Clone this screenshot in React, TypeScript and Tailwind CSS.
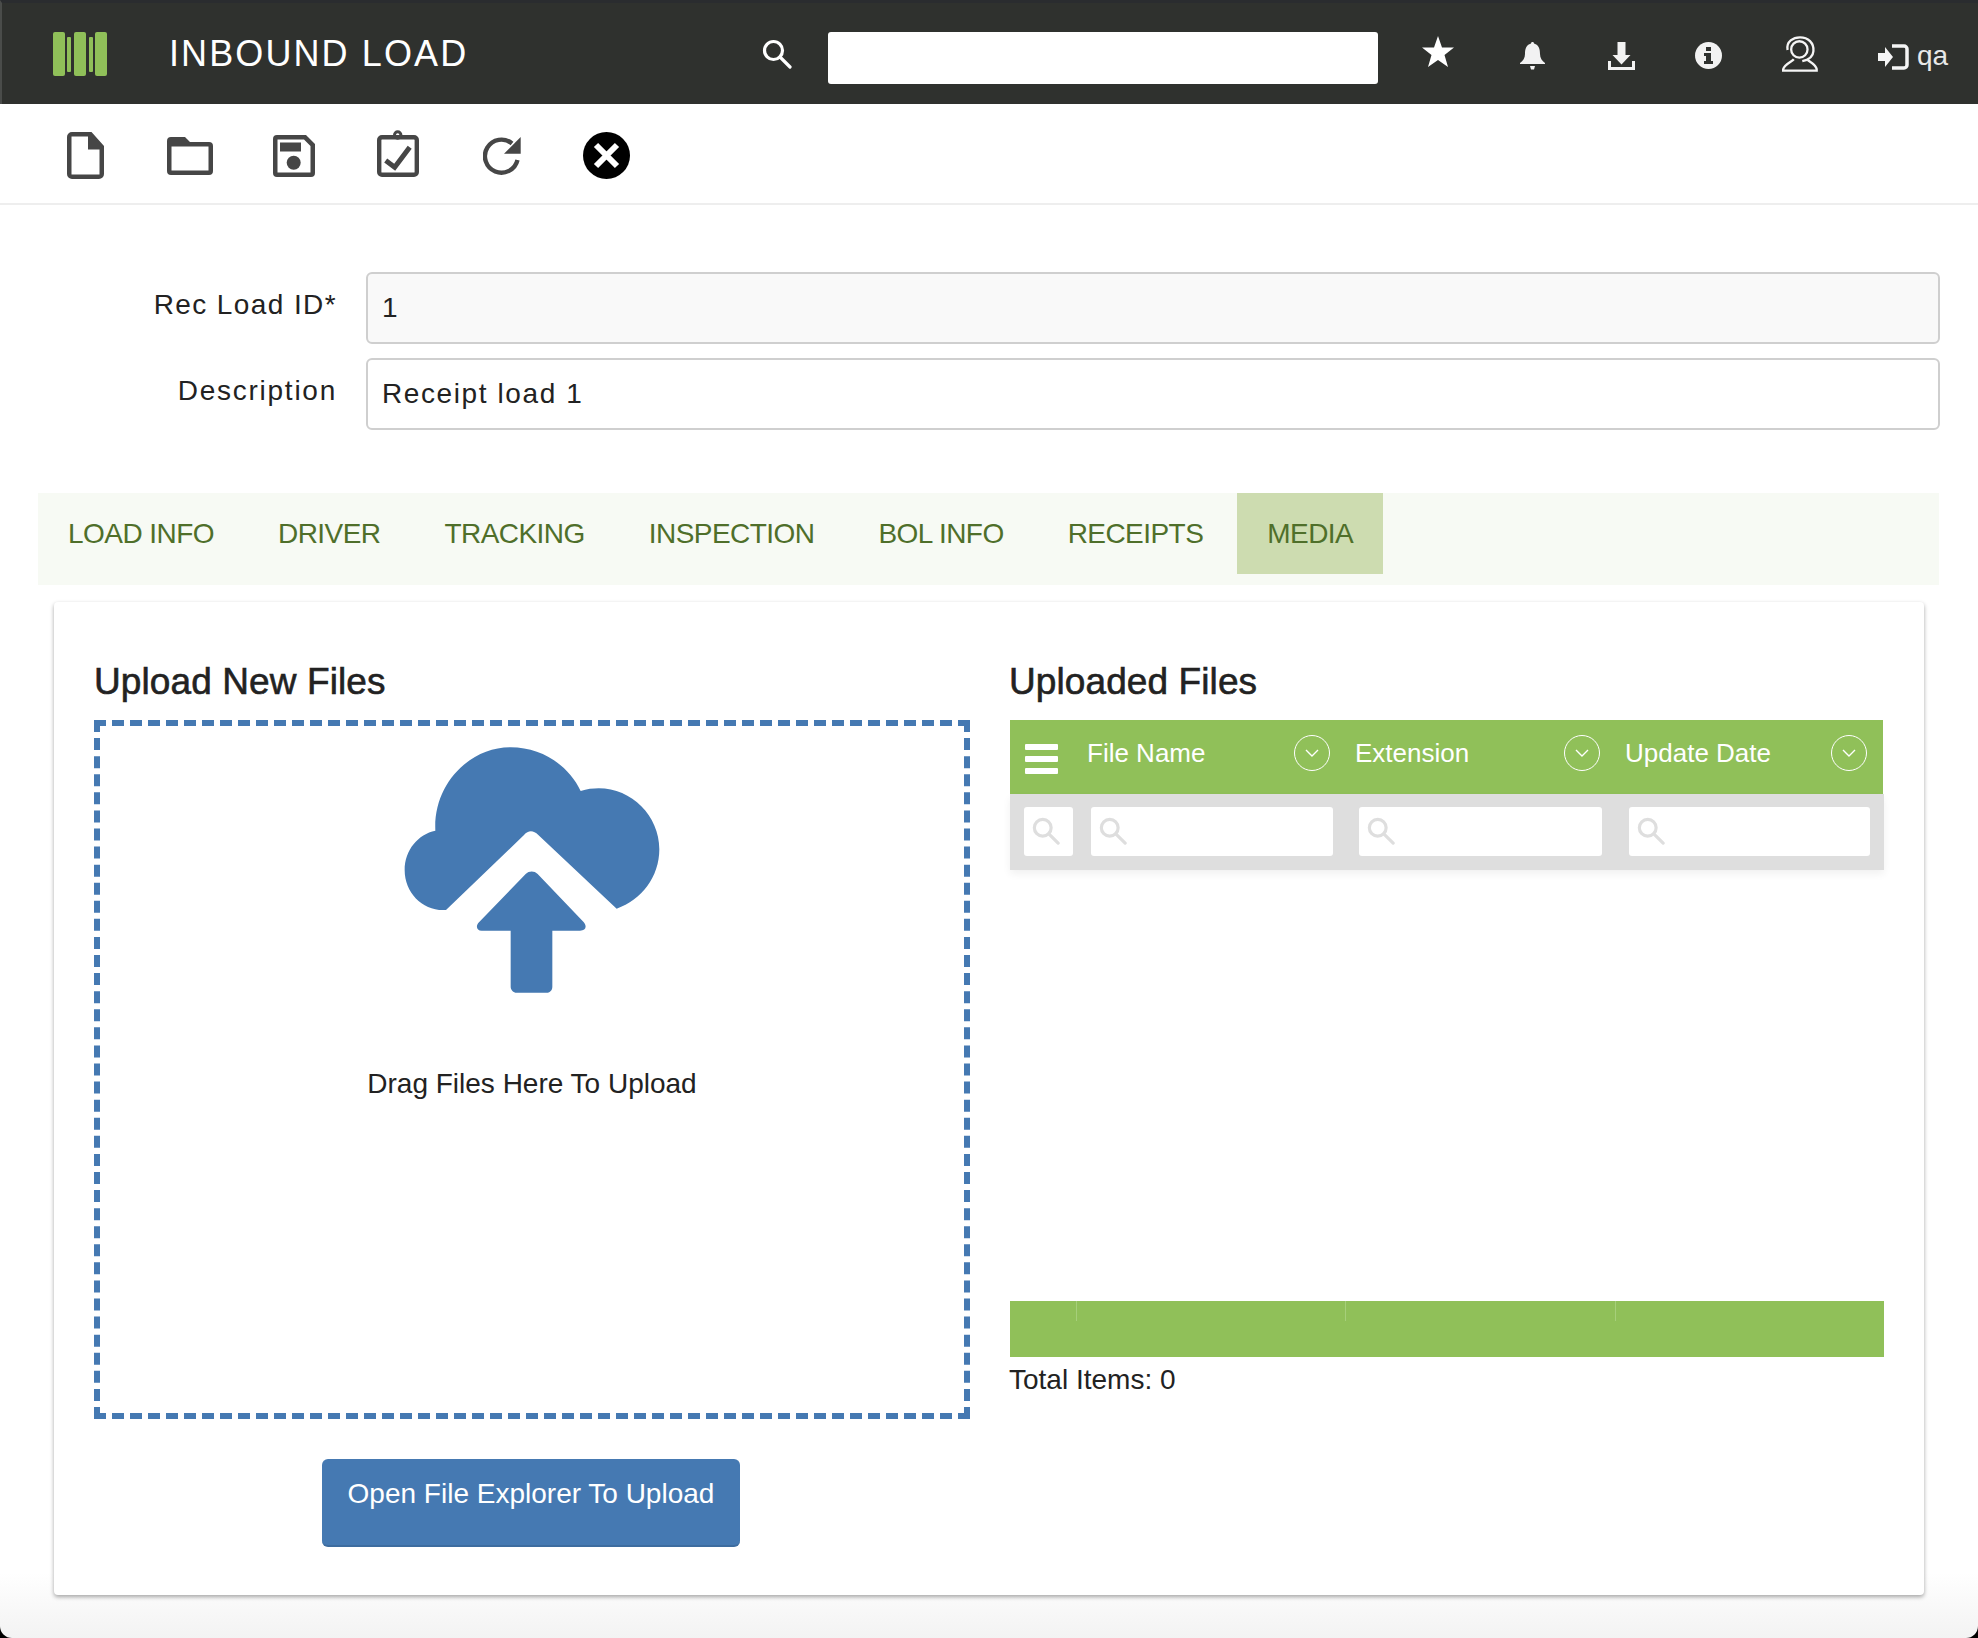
import React from "react";

const sans = "font-['Liberation_Sans',Arial,sans-serif]";
const tabs = ["LOAD INFO", "DRIVER", "TRACKING", "INSPECTION", "BOL INFO", "RECEIPTS", "MEDIA"];
const columns = ["File Name", "Extension", "Update Date"];

const Logo = () => (
  <svg width="54" height="44" viewBox="0 0 54 44" fill="#90c059">
    <rect x="0" y="0" width="12" height="44" rx="2" />
    <rect x="14" y="5" width="4" height="35" rx="1" />
    <rect x="21" y="0" width="12" height="44" rx="2" />
    <rect x="36" y="5" width="4" height="35" rx="1" />
    <rect x="42" y="0" width="12" height="44" rx="2" />
  </svg>
);

const SearchGlyph = ({ size, color, weight }: { size: number; color: string; weight: number }) => (
  <svg width={size} height={size} viewBox="0 0 30 30" fill="none" stroke={color} strokeWidth={weight}>
    <circle cx="11.5" cy="11.5" r="9" />
    <path strokeLinecap="round" d="M18 18L28 28" />
  </svg>
);

const FileIcon = () => (
  <svg width="37" height="47" viewBox="0 0 37 47" fill="#464646">
    <path fillRule="evenodd" d="M5 0H24.5L37 14V42a5 5 0 0 1-5 5H5a5 5 0 0 1-5-5V5a5 5 0 0 1 5-5ZM4.5 4.5V42.5H32.5V17.5H21V4.5Z" />
  </svg>
);

const FolderIcon = () => (
  <svg width="46" height="38" viewBox="0 0 46 38" fill="#464646">
    <path fillRule="evenodd" d="M4 0H18L23 5H42a4 4 0 0 1 4 4V34a4 4 0 0 1-4 4H4a4 4 0 0 1-4-4V4a4 4 0 0 1 4-4ZM4.5 9.5V33.5H41.5V9.5Z" />
  </svg>
);

const SaveIcon = () => (
  <svg width="42" height="42" viewBox="0 0 42 42" fill="#464646">
    <path fillRule="evenodd" d="M4 0H33L42 9V38a4 4 0 0 1-4 4H4a4 4 0 0 1-4-4V4a4 4 0 0 1 4-4ZM4.5 4.5V37.5H37.5V11L31 4.5Z" />
    <rect x="7" y="7.5" width="21" height="9" />
    <circle cx="20.7" cy="27.7" r="7" />
  </svg>
);

const ClipboardIcon = () => (
  <svg width="42" height="47" viewBox="0 0 42 47" fill="none" stroke="#464646">
    <path strokeWidth="4.4" d="M5 7.2H37a2.8 2.8 0 0 1 2.8 2.8V42a2.8 2.8 0 0 1-2.8 2.8H5a2.8 2.8 0 0 1-2.8-2.8V10a2.8 2.8 0 0 1 2.8-2.8Z" />
    <circle cx="20.7" cy="5" r="3.2" strokeWidth="3" />
    <path strokeWidth="5" d="M8.7 30.5L17.7 37.3L32.7 17.3" />
  </svg>
);

const RefreshIcon = () => (
  <svg width="39" height="38" viewBox="0 0 39 38" fill="none">
    <path stroke="#464646" strokeWidth="4.4" d="M34.5 23A16.5 16.5 0 1 1 29 6.5" />
    <path fill="#464646" d="M37.7 0V16.7H21Z" />
  </svg>
);

const CloseIcon = () => (
  <svg width="47" height="47" viewBox="0 0 47 47">
    <circle cx="23.5" cy="23.5" r="23.5" fill="#000" />
    <path stroke="#fff" strokeWidth="6" d="M13 13L34 34M34 13L13 34" />
  </svg>
);

const CloudUpload = () => (
  <svg width="300" height="294" viewBox="0 18 900 882" fill="#4579b2">
    <path d="M198 570C130 575 74 520 74 450C74 390 115 342 166 332C160 190 270 82 392 82C485 82 565 135 602 213C620 207 640 205 656 205C755 205 838 288 838 388C838 470 785 540 710 566L475 345C460 330 445 330 432 345Z" />
    <path d="M437 462C447 452 463 452 473 462L610 605C622 618 618 632 600 632H517V800C517 812 508 818 500 818H410C400 818 392 810 392 800V632H305C290 632 286 618 297 607Z" />
  </svg>
);

const StarIcon = () => (
  <svg width="32" height="32" viewBox="0 0 32 32" fill="#fff">
    <path d="M16 0L20 11.5H32L22.5 19L26 31L16 24L6 31L9.5 19L0 11.5H12Z" />
  </svg>
);

const BellIcon = () => (
  <svg width="25" height="28" viewBox="0 0 25 28" fill="#f2f2f2">
    <path d="M12.5 0C13.5 0 14 .6 14 1.5C19 3 20 7 20 12C20 16 22 19 25 21V22H0V21C3 19 5 16 5 12C5 7 6 3 11 1.5C11 .6 11.5 0 12.5 0Z" />
    <path d="M10 24H15L14 27.5H11Z" />
  </svg>
);

const DownloadIcon = () => (
  <svg width="27" height="28" viewBox="0 0 27 28" fill="#f2f2f2">
    <path d="M9.5 0H17.5V13H22.5L13.5 22.5L4.5 13H9.5Z" />
    <path d="M0 19H3V25H24V19H27V28H0Z" />
  </svg>
);

const InfoIcon = () => (
  <svg width="27" height="27" viewBox="0 0 27 27">
    <circle cx="13.5" cy="13.5" r="13.5" fill="#f2f2f2" />
    <rect x="11" y="5" width="5" height="4" fill="#2f312e" />
    <path fill="#2f312e" d="M9 11H16V19H18V22H9V19H11V14H9Z" />
  </svg>
);

const UserIcon = () => (
  <svg width="36" height="36" viewBox="0 0 110 108" fill="none" stroke="#f5f5f5" strokeWidth="7">
    <circle cx="53" cy="40" r="25" />
    <path d="M17 42C12 15 35 3 55 3C80 3 98 20 96 45C95 62 80 72 62 76" />
    <path d="M36 70C30 78 5 85 3 103V105H106V100C102 85 85 78 78 72" />
  </svg>
);

const SignInIcon = () => (
  <svg width="31" height="26" viewBox="0 0 31 26">
    <path fill="#f5f5f5" d="M0 9H7V3L15 13L7 23V17H0Z" />
    <path fill="none" stroke="#f5f5f5" strokeWidth="3.5" d="M14 2H26a3 3 0 0 1 3 3V21a3 3 0 0 1-3 3H14" />
  </svg>
);

const Chevron = () => (
  <span className="flex h-[36px] w-[36px] shrink-0 items-center justify-center rounded-full border-[1.5px] border-white">
    <svg width="14" height="8" viewBox="0 0 14 8" fill="none" stroke="#fff" strokeWidth="1.4">
      <path d="M1 1L7 7L13 1" />
    </svg>
  </span>
);

const FilterBox = ({ className }: { className: string }) => (
  <div className={`flex h-[49px] items-center rounded-[3px] bg-white pl-[8px] ${className}`}>
    <SearchGlyph size={28} color="#dedede" weight={3.4} />
  </div>
);

export default function App() {
  return (
    <div className="h-[1638px] bg-black">
      <div className={`${sans} h-[1638px] overflow-hidden rounded-b-[12px] bg-gradient-to-b from-white from-[96%] to-[#f3f3f3] text-[#222]`}>
        <header className="flex h-[104px] items-center border-t-[3px] border-l-2 border-t-[#2a2c2f] border-l-[#4a4c4a] bg-[#2f312e]">
          <div className="ml-[51px]">
            <Logo />
          </div>
          <h1 className="ml-[62px] w-[593px] text-[36px] tracking-[2.1px] text-white">INBOUND LOAD</h1>
          <SearchGlyph size={30} color="#fff" weight={3.2} />
          <input className="ml-[36px] mt-[8px] h-[52px] w-[550px] rounded-[3px] bg-white" />
          <div className="ml-[44px] mt-[-3px]">
            <StarIcon />
          </div>
          <div className="ml-[66px] mt-[5px]">
            <BellIcon />
          </div>
          <div className="ml-[63px] mt-[5px]">
            <DownloadIcon />
          </div>
          <div className="ml-[60px] mt-[4px]">
            <InfoIcon />
          </div>
          <div className="ml-[60px] mt-[1px]">
            <UserIcon />
          </div>
          <div className="ml-[60px] mt-[6px]">
            <SignInIcon />
          </div>
          <span className="ml-[8px] mt-[4px] text-[28px] text-[#e8e8e8]">qa</span>
        </header>

        <div className="flex h-[101px] items-center border-b-2 border-b-[#eeeeee] pt-[4px]">
          <div className="ml-[67px] w-[100px]">
            <FileIcon />
          </div>
          <div className="w-[106px]">
            <FolderIcon />
          </div>
          <div className="w-[104px]">
            <SaveIcon />
          </div>
          <div className="mt-[-4px] w-[106px]">
            <ClipboardIcon />
          </div>
          <div className="w-[100px]">
            <RefreshIcon />
          </div>
          <CloseIcon />
        </div>

        <div className="mt-[67px] flex flex-col gap-[14px] pr-[38px] text-[28px] tracking-[1.6px]">
          <div className="flex items-center">
            <label className="mt-[-6px] w-[337px] text-right tracking-[1.4px]">Rec Load ID*</label>
            <div className="ml-[29px] flex h-[72px] flex-1 items-center rounded-[6px] border-2 border-[#cfcfcf] bg-[#f9f9f9] pl-[14px]">1</div>
          </div>
          <div className="flex items-center">
            <label className="mt-[-6px] w-[337px] text-right tracking-[1.75px]">Description</label>
            <div className="ml-[29px] flex h-[72px] flex-1 items-center rounded-[6px] border-2 border-[#cfcfcf] bg-white pl-[14px]">Receipt load 1</div>
          </div>
        </div>

        <nav className="ml-[38px] mr-[39px] mt-[63px] flex h-[92px] items-start gap-[4px] bg-[#f7faf4] text-[28px] tracking-[-0.55px] text-[#4f6f2a]">
          {tabs.map((tab) => (
            <div
              key={tab}
              className={`flex h-[81px] items-center px-[30px] ${tab === "MEDIA" ? "bg-[#cddcb0]" : ""}`}
            >
              {tab}
            </div>
          ))}
        </nav>

        <main className="ml-[54px] mt-[17px] flex h-[993px] w-[1870px] gap-[40px] rounded-[4px] bg-white px-[40px] pt-[56px] shadow-[0_2px_4px_rgba(0,0,0,0.35)]">
          <section className="w-[876px]">
            <h2 className="mt-[1px] text-[37px] font-medium leading-[45px] tracking-[0.1px] [-webkit-text-stroke:0.6px_#222]">Upload New Files</h2>
            <div className="mt-[16px] flex h-[699px] flex-col items-center border-[6px] border-dashed border-[#4579b2]">
              <div className="mr-[5px]">
                <CloudUpload />
              </div>
              <p className="mt-[43px] text-[28px]">Drag Files Here To Upload</p>
            </div>
            <div className="mt-[40px] flex justify-center pr-[2px]">
              <button className="h-[88px] w-[418px] rounded-[6px] border-b-2 border-b-[#3d6c9f] bg-[#4579b2] pb-[16px] text-[28px] text-white">
                Open File Explorer To Upload
              </button>
            </div>
          </section>

          <section className="w-[874px]">
            <h2 className="ml-[-1px] mt-[1px] text-[37px] font-medium leading-[45px] tracking-[0.1px] [-webkit-text-stroke:0.6px_#222]">Uploaded Files</h2>
            <div className="mr-[1px] mt-[16px] flex h-[74px] items-center bg-[#90c059] pb-[8px] pl-[15px] text-[26px] text-white">
              <div className="mt-[12px] flex w-[62px] flex-col gap-[6px]">
                <span className="h-[6px] w-[33px] rounded-[1px] bg-white" />
                <span className="h-[6px] w-[33px] rounded-[1px] bg-white" />
                <span className="h-[6px] w-[33px] rounded-[1px] bg-white" />
              </div>
              {columns.map((column, i) => (
                <div
                  key={column}
                  className={`flex items-center justify-between ${i === 0 ? "w-[243px]" : i === 1 ? "ml-[25px] w-[245px]" : "ml-[25px] w-[242px]"}`}
                >
                  {column}
                  <Chevron />
                </div>
              ))}
            </div>
            <div className="flex h-[76px] items-center bg-[#dedede] pb-[2px] pl-[14px] shadow-[0_4px_8px_rgba(0,0,0,0.06)]">
              <FilterBox className="w-[49px]" />
              <FilterBox className="ml-[18px] w-[242px]" />
              <FilterBox className="ml-[26px] w-[243px]" />
              <FilterBox className="ml-[27px] w-[241px]" />
            </div>
            <div className="mt-[431px] flex h-[56px] items-start bg-[#90c059]">
              <span className="ml-[66px] h-[20px] w-px bg-[#a6cf7a]" />
              <span className="ml-[268px] h-[20px] w-px bg-[#a6cf7a]" />
              <span className="ml-[269px] h-[20px] w-px bg-[#a6cf7a]" />
            </div>
            <p className="ml-[-1px] mt-[2px] text-[28px]">Total Items: 0</p>
          </section>
        </main>
      </div>
    </div>
  );
}
